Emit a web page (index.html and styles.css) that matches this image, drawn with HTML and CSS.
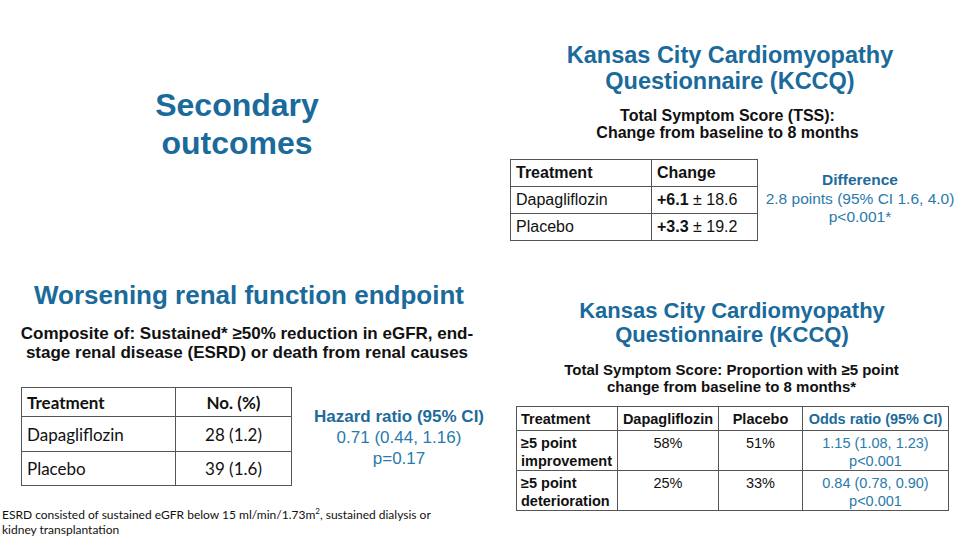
FILE: index.html
```html
<!DOCTYPE html>
<html lang="en">
<head>
<meta charset="utf-8">
<title>Secondary outcomes</title>
<link rel="stylesheet" href="styles.css">
</head>
<body>
<div class="slide">
  <div class="col-left">
    <h1 class="sec-title">Secondary<br>outcomes</h1>
    <h2 class="renal-title">Worsening renal function endpoint</h2>
    <p class="composite">Composite of: Sustained* ≥50% reduction in eGFR, end-<br>stage renal disease (ESRD) or death from renal causes</p>
    <div class="renal-row">
      <table class="renal-table">
        <colgroup><col class="rc1"><col class="rc2"></colgroup>
        <tr class="rh"><th class="left">Treatment</th><th class="center">No. (%)</th></tr>
        <tr class="r1"><td class="left">Dapagliflozin</td><td class="center">28 (1.2)</td></tr>
        <tr class="r2"><td class="left">Placebo</td><td class="center">39 (1.6)</td></tr>
      </table>
      <div class="hazard">
        <div class="hazard-title">Hazard ratio (95% CI)</div>
        <div>0.71 (0.44, 1.16)</div>
        <div>p=0.17</div>
      </div>
    </div>
    <p class="footnote">ESRD consisted of sustained eGFR below 15 ml/min/1.73m<sup>2</sup>, sustained dialysis or<br>kidney transplantation</p>
  </div>

  <div class="col-right">
    <h2 class="kccq-title">Kansas City Cardiomyopathy<br>Questionnaire (KCCQ)</h2>
    <p class="tss">Total Symptom Score (TSS):<br>Change from baseline to 8 months</p>
    <div class="tss-row">
      <table class="tss-table">
        <colgroup><col class="tc1"><col class="tc2"></colgroup>
        <tr><th>Treatment</th><th>Change</th></tr>
        <tr><td>Dapagliflozin</td><td><b>+6.1</b> ± 18.6</td></tr>
        <tr><td>Placebo</td><td><b>+3.3</b> ± 19.2</td></tr>
      </table>
      <div class="difference">
        <div class="diff-title">Difference</div>
        <div>2.8 points (95% CI 1.6, 4.0)</div>
        <div>p&lt;0.001*</div>
      </div>
    </div>

    <h2 class="kccq-title2">Kansas City Cardiomyopathy<br>Questionnaire (KCCQ)</h2>
    <p class="prop">Total Symptom Score: Proportion with ≥5 point<br>change from baseline to 8 months*</p>
    <table class="prop-table">
      <colgroup><col class="pc1"><col class="pc2"><col class="pc3"><col class="pc4"></colgroup>
      <tr class="ph"><th class="first">Treatment</th><th>Dapagliflozin</th><th>Placebo</th><th class="blue">Odds ratio (95% CI)</th></tr>
      <tr class="pr"><th class="first">≥5 point<br>improvement</th><td>58%</td><td>51%</td><td class="blue">1.15 (1.08, 1.23)<br>p&lt;0.001</td></tr>
      <tr class="pr"><th class="first">≥5 point<br>deterioration</th><td>25%</td><td>33%</td><td class="blue">0.84 (0.78, 0.90)<br>p&lt;0.001</td></tr>
    </table>
  </div>
</div>
</body>
</html>
```

FILE: styles.css
```css
html, body {
  margin: 0;
  padding: 0;
}
body {
  width: 960px;
  height: 540px;
  overflow: hidden;
  background: #ffffff;
  font-family: "Liberation Sans", Arial, sans-serif;
  color: #111111;
}
.slide {
  display: flex;
  width: 960px;
  height: 540px;
}

/* ---------- left column ---------- */
.col-left {
  width: 500px;
  display: flex;
  flex-direction: column;
}
.sec-title {
  margin: 86px 0 0;
  width: 474px;
  text-align: center;
  font-size: 32px;
  line-height: 38px;
  font-weight: bold;
  color: #1a6a9b;
}
.renal-title {
  margin: 118px 0 0;
  width: 498px;
  text-align: center;
  font-size: 26px;
  line-height: 30px;
  font-weight: bold;
  color: #1a6a9b;
  white-space: nowrap;
}
.composite {
  margin: 14px 0 0;
  width: 494px;
  text-align: center;
  font-size: 17px;
  line-height: 19px;
  font-weight: bold;
  white-space: nowrap;
}
.renal-row {
  display: flex;
  align-items: flex-start;
  margin: 25px 0 0 21px;
}
.renal-table {
  border-collapse: collapse;
  font-family: Lato, "Liberation Sans", sans-serif;
  font-size: 17px;
  color: #111;
}
.renal-table .rc1 { width: 154px; }
.renal-table .rc2 { width: 116px; }
.renal-table th,
.renal-table td {
  border: 1px solid #555;
  padding: 0 5px;
  vertical-align: middle;
}
.renal-table th { font-weight: bold; }
.renal-table .rh th { height: 28px; }
.renal-table .r1 td { height: 34px; }
.renal-table .r2 td { height: 33px; }
.left { text-align: left; }
.center { text-align: center; }
.hazard {
  margin: 19px 0 0 10px;
  width: 194px;
  text-align: center;
  font-size: 17px;
  line-height: 21px;
  color: #2a7aab;
}
.hazard-title {
  font-weight: bold;
  color: #1d6b9b;
}
.footnote {
  margin: 21px 0 0 2px;
  font-family: Lato, "Liberation Sans", sans-serif;
  font-size: 12px;
  line-height: 15px;
  white-space: nowrap;
}
.footnote sup {
  font-size: 8px;
  line-height: 0;
}

/* ---------- right column ---------- */
.col-right {
  width: 460px;
  display: flex;
  flex-direction: column;
  align-items: center;
}
.kccq-title {
  margin: 42px 0 0;
  font-size: 23.5px;
  line-height: 26px;
  font-weight: bold;
  text-align: center;
  color: #1a6a9b;
  white-space: nowrap;
}
.tss {
  margin: 13px 5px 0 0;
  font-size: 16px;
  line-height: 17px;
  font-weight: bold;
  text-align: center;
  white-space: nowrap;
}
.tss-row {
  align-self: flex-start;
  display: flex;
  align-items: flex-start;
  margin: 18px 0 0 10px;
}
.tss-table {
  border-collapse: collapse;
  font-size: 16px;
}
.tss-table .tc1 { width: 141px; }
.tss-table .tc2 { width: 106px; }
.tss-table th,
.tss-table td {
  border: 1px solid #555;
  padding: 0 5px;
  height: 26px;
  text-align: left;
  vertical-align: middle;
  white-space: nowrap;
}
.difference {
  margin: 12px 0 0 3px;
  width: 198px;
  text-align: center;
  font-size: 15.5px;
  line-height: 18.5px;
  color: #2a7aab;
  white-space: nowrap;
}
.diff-title {
  font-weight: bold;
  color: #1d6b9b;
}
.kccq-title2 {
  margin: 58px 0 0 4px;
  font-size: 22px;
  line-height: 24px;
  font-weight: bold;
  text-align: center;
  color: #1a6a9b;
  white-space: nowrap;
}
.prop {
  margin: 14px 0 0 3px;
  font-size: 15px;
  line-height: 17px;
  font-weight: bold;
  text-align: center;
  white-space: nowrap;
}
.prop-table {
  align-self: flex-start;
  margin: 11px 0 0 16px;
  border-collapse: collapse;
  font-size: 14.5px;
  line-height: 18px;
}
.prop-table .pc1 { width: 101px; }
.prop-table .pc2 { width: 101px; }
.prop-table .pc3 { width: 84px; }
.prop-table .pc4 { width: 146px; }
.prop-table th,
.prop-table td {
  border: 1px solid #555;
  padding: 3px 4px 0;
  text-align: center;
  vertical-align: top;
  white-space: nowrap;
}
.prop-table th { font-weight: bold; }
.prop-table th.first { text-align: left; }
.prop-table .ph th { height: 20px; }
.prop-table .pr th,
.prop-table .pr td { height: 36px; }
.prop-table .blue { color: #2a7aab; }
.prop-table th.blue { color: #1d6b9b; }
```
